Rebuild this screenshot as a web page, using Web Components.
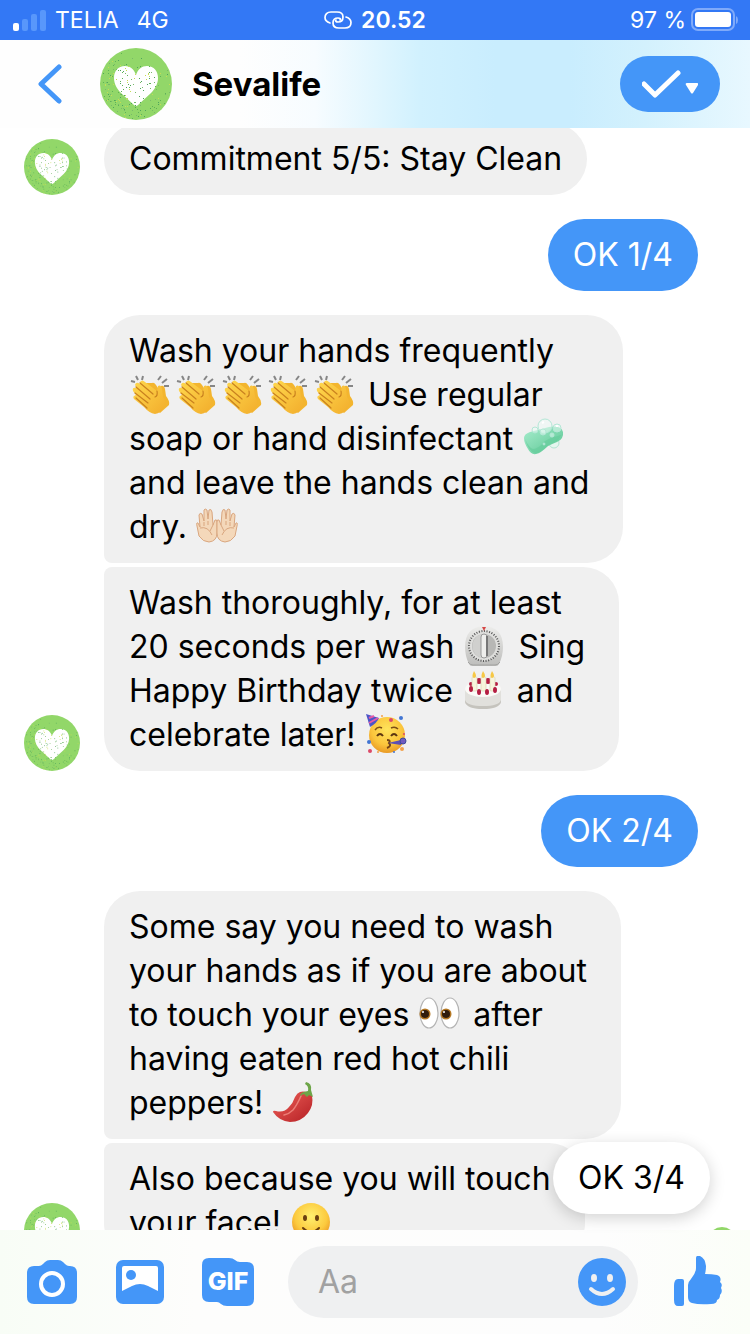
<!DOCTYPE html>
<html lang="en">
<head>
<meta charset="utf-8">
<meta name="viewport" content="width=device-width, initial-scale=1">
<title>Sevalife</title>
<style>
  body {
    margin: 0;
    background: #fff;
    color: #000;
    font-family: Inter, "Liberation Sans", sans-serif;
  }
</style>
</head>
<body>
<chat-app>
  <status-bar slot="status" carrier="TELIA" network="4G" time="20.52" battery="97 %"></status-bar>
  <chat-header slot="header">Sevalife</chat-header>

  <message-group>
    <chat-bubble>Commitment 5/5: Stay Clean</chat-bubble>
  </message-group>
  <message-group own>
    <chat-bubble own>OK 1/4</chat-bubble>
  </message-group>
  <message-group>
    <chat-bubble place="first">Wash your hands frequently 
<emoji-icon name="clap"></emoji-icon><emoji-icon name="clap"></emoji-icon><emoji-icon name="clap"></emoji-icon><emoji-icon name="clap"></emoji-icon><emoji-icon name="clap"></emoji-icon> Use regular 
soap or hand disinfectant <emoji-icon name="soap"></emoji-icon>
and leave the hands clean and 
dry. <emoji-icon name="palms"></emoji-icon></chat-bubble>
    <chat-bubble place="last">Wash thoroughly, for at least 
20 seconds per wash <emoji-icon name="timer"></emoji-icon> Sing 
Happy Birthday twice <emoji-icon name="cake"></emoji-icon> and 
celebrate later! <emoji-icon name="party"></emoji-icon></chat-bubble>
  </message-group>
  <message-group own>
    <chat-bubble own>OK 2/4</chat-bubble>
  </message-group>
  <message-group seen>
    <chat-bubble place="first">Some say you need to wash 
your hands as if you are about 
to touch your eyes <emoji-icon name="eyes"></emoji-icon> after 
having eaten red hot chili 
peppers! <emoji-icon name="chili"></emoji-icon></chat-bubble>
    <chat-bubble place="last">Also because you will touch 
your face! <emoji-icon name="smile"></emoji-icon></chat-bubble>
  </message-group>

  <quick-reply slot="reply">OK 3/4</quick-reply>
  <message-composer slot="composer"></message-composer>
</chat-app>

<script>
// Emoji drawings, all on a 40x40 grid
const emojis = {
  clap: {
    label: 'Clapping hands',
    svg: `
      <defs><linearGradient id="g" x1="0" y1="0" x2="1" y2="1"><stop offset="0" stop-color="#ffd94e"/><stop offset="1" stop-color="#f2ad2c"/></linearGradient></defs>
      <path d="M1 7l4 1M6 2l2 4M13 2l-1 4M28 6l3-4M32 9l5-4M34 12h5" stroke="#868686" stroke-width="2" fill="none"/>
      <path d="M22 9q2-1 4 2l4 6 1-5q3-1 4 3l1 7q4 5 3 9l-9 8-17-15-2-15z" fill="#f3b52f"/>
      <path d="M10 8q2-3 5 0l12 9 1-5q3-2 4 3l1 8q4 6 1 10-3 6-9 7-6-1-11-7L4 25q-2-3 2-4l-3-4q-1-4 3-3l1 0-2-3q1-4 5-1z" fill="url(#g)"/>
      <path d="M10 9l13 11M6 13l14 12M5 19l13 10M6 24l11 10M27 17q1 5-2 6" stroke="#c9811f" stroke-width="1.2" fill="none" stroke-linecap="round"/>`
  },
  soap: {
    label: 'Soap',
    svg: `
      <defs><linearGradient id="g" x1="0" y1="0" x2="1" y2="1"><stop offset="0" stop-color="#a7edcd"/><stop offset="1" stop-color="#58c491"/></linearGradient></defs>
      <circle cx="31" cy="25" r="5" fill="#e6f6ef" stroke="#b3e4d2"/>
      <path d="M1 20q0-4 6-6L26 9q12-2 14 5 1 7-6 10-5 2-9 4-7 7-12 8-5 1-8-5-4-6-4-11z" fill="url(#g)"/>
      <path d="M2 21q4 9 8 10 5 0 12-8 7-4 16-6-1 5-8 8-5 2-8 5-6 6-10 5-6-1-10-14z" fill="#66cc9b" opacity=".65"/>
      <g fill="#eefcf7" fill-opacity=".5" stroke="#b4e7d6"><circle cx="22" cy="8" r="7"/><circle cx="34" cy="10" r="4"/><circle cx="12" cy="12" r="3"/><circle cx="20" cy="14" r="3"/><circle cx="29" cy="17" r="2"/><circle cx="21" cy="26" r="1"/></g>
      <path d="M19 5l2-1M33 8l2 0" stroke="#fff" stroke-width="2"/>`
  },
  palms: {
    label: 'Palms up together',
    svg: `
      <g><path d="M20 16q0-3-2-2l-2 5-1-13q-1-4-3-2l-1 9-1-9q-2-2-3 0v11L5 8Q3 6 2 9l1 12-2-4q-2-1-1 3l2 10q4 6 10 6 8-1 8-9z" fill="#f4d8ba" stroke="#d9a67f"/>
      <path d="M7 16v4M11 15v4M3 22q8-2 12 7M16 19l-3 6" stroke="#d9a67f" fill="none"/></g>
      <g transform="translate(40 0) scale(-1 1)"><path d="M20 16q0-3-2-2l-2 5-1-13q-1-4-3-2l-1 9-1-9q-2-2-3 0v11L5 8Q3 6 2 9l1 12-2-4q-2-1-1 3l2 10q4 6 10 6 8-1 8-9z" fill="#f4d8ba" stroke="#d9a67f"/>
      <path d="M7 16v4M11 15v4M3 22q8-2 12 7M16 19l-3 6" stroke="#d9a67f" fill="none"/></g>`
  },
  timer: {
    label: 'Timer',
    svg: `
      <defs><linearGradient id="g" x1="0" y1="0" x2="0" y2="1"><stop offset="0" stop-color="#ededeb"/><stop offset="1" stop-color="#bdbdbb"/></linearGradient></defs>
      <path d="M20 0q19 1 19 21 0 9-4 17-1 2-3 2H8q-2 0-3-2-4-8-4-17Q1 1 20 0z" fill="url(#g)"/>
      <path d="M4 36q2 3 5 3h22q3 0 5-3" stroke="#a3a3a1" fill="none"/>
      <circle cx="20" cy="20" r="15" fill="#dededc" stroke="#555" stroke-width="2" stroke-dasharray="1 1.6"/>
      <circle cx="20" cy="20" r="12" fill="#b7b7b5"/>
      <path d="M10 14a12 12 0 0 1 9-6v24a12 12 0 0 1-9-18z" fill="#d0d0ce"/>
      <rect x="17" y="8" width="6" height="24" rx="3" fill="#eeeeec" stroke="#999"/><path d="M23 10v20" stroke="#777" stroke-width="2"/>
      <path d="M18 1h4l-2 4z" fill="#d64747"/>`
  },
  cake: {
    label: 'Birthday cake',
    svg: `
      <path d="M2 20q0-8 18-8t18 8v12q-2 7-18 7T2 32z" fill="#e1e0dc"/>
      <path d="M2 30q2 6 18 6t18-6v2q-2 7-18 7T2 32z" fill="#c5c3bd"/>
      <ellipse cx="20" cy="19" rx="18" ry="8" fill="#fbfaf7"/>
      <g fill="#b51e43"><circle cx="16" cy="11" r="3"/><circle cx="25" cy="11" r="3"/><circle cx="8" cy="14" r="2"/><circle cx="33" cy="14" r="2"/></g>
      <g fill="#f7f4dc" stroke="#d8d2b4" stroke-width=".6"><rect x="9" y="7" width="5" height="14" rx="1"/><rect x="18" y="7" width="5" height="14" rx="1"/><rect x="27" y="7" width="5" height="14" rx="1"/></g>
      <g fill="#f6c845"><path d="M11 1q4 6 0 7-3-1 0-7zM20 1q4 6 0 7-3-1 0-7zM29 1q4 6 0 7-3-1 0-7z"/></g>
      <g fill="#b51e43"><ellipse cx="8" cy="19" rx="2" ry="3"/><ellipse cx="16" cy="22" rx="2" ry="3"/><ellipse cx="24" cy="22" rx="2" ry="3"/><ellipse cx="32" cy="20" rx="2" ry="3"/></g>`
  },
  party: {
    label: 'Partying face',
    svg: `
      <defs><radialGradient id="g" cx=".5" cy=".35" r=".65"><stop offset="0" stop-color="#ffe45c"/><stop offset=".65" stop-color="#fbc53c"/><stop offset="1" stop-color="#e99a25"/></radialGradient></defs>
      <circle cx="21" cy="21" r="18" fill="url(#g)"/>
      <path d="M0 0l13 4q-2 5-9 9z" fill="#4b54c8"/><path d="M3 4l5-2M3 9l9-5" stroke="#e45aa8" stroke-width="2"/>
      <path d="M9 16q3-4 7-2M25 14q4-2 7 1" stroke="#7b4d16" stroke-width="1.5" fill="none"/>
      <path d="M11 22q3-4 6 0M25 22q3-4 6 0" stroke="#5c3510" stroke-width="2" fill="none"/>
      <path d="M21 26q4 0 2 3 3 3-2 5" stroke="#754414" stroke-width="2" fill="none"/>
      <path d="M22 29l13-3v5z" fill="#5c50b4"/><circle cx="37" cy="27" r="3" fill="#6f5bc0" stroke="#3f489d"/>
      <g fill="#dc4a68"><circle cx="25" cy="6" r="2"/><circle cx="4" cy="37" r="2"/><circle cx="38" cy="20" r="1"/></g>
      <g fill="#4275d3"><circle cx="35" cy="4" r="2"/><circle cx="3" cy="28" r="2"/><circle cx="28" cy="38" r="1"/></g>
      <g fill="#f3a14b"><circle cx="16" cy="2" r="1"/><circle cx="36" cy="35" r="2"/><circle cx="12" cy="38" r="1"/></g>`
  },
  eyes: {
    label: 'Eyes',
    svg: `
      <g fill="#fff" stroke="#b4b4b4" stroke-width="1.2"><ellipse cx="10" cy="19" rx="9" ry="15"/><ellipse cx="31" cy="19" rx="9" ry="15"/></g>
      <g fill="#b47722"><circle cx="6" cy="20" r="5.500"/><circle cx="27" cy="20" r="5.500"/></g>
      <g fill="#301c0c"><circle cx="6" cy="20" r="4"/><circle cx="27" cy="20" r="4"/></g>
      <g fill="#fff"><circle cx="4" cy="18" r="1"/><circle cx="25" cy="18" r="1"/></g>`
  },
  chili: {
    label: 'Hot pepper',
    svg: `
      <defs><linearGradient id="g" x1="0" y1="0" x2="1" y2="1"><stop offset="0" stop-color="#f0625a"/><stop offset="1" stop-color="#b41f24"/></linearGradient></defs>
      <path d="M27 10q6-2 12 4 2 9-4 17-7 9-18 9Q6 39 0 30q0-2 3-1 8 2 13-4 4-4 6-10 2-4 5-5z" fill="url(#g)"/>
      <path d="M28 14q-4 9-8 14-4 4-9 5" stroke="#f79a90" stroke-width="1.5" fill="none" stroke-linecap="round" opacity=".7"/>
      <path d="M35 9q1-5-3-7l1-2q6 1 5 8l2 7-4-2-2 2-3-3-4 2q0-4 8-5z" fill="#6da548"/>`
  },
  smile: {
    label: 'Slightly smiling face',
    svg: `
      <defs><radialGradient id="g" cx=".5" cy=".35" r=".65"><stop offset="0" stop-color="#fff070"/><stop offset=".65" stop-color="#fcca3e"/><stop offset="1" stop-color="#e99422"/></radialGradient></defs>
      <circle cx="20" cy="20" r="19" fill="url(#g)"/>
      <ellipse cx="14" cy="16" rx="2" ry="3" fill="#6b3f10"/><ellipse cx="26" cy="16" rx="2" ry="3" fill="#6b3f10"/>
      <path d="M12 26q8 8 16 0" stroke="#6b3f10" stroke-width="2" fill="none" stroke-linecap="round"/>`
  }
};

class EmojiIcon extends HTMLElement {
  constructor() {
    super();
    this.attachShadow({ mode: 'open' });
  }

  connectedCallback() {
    const emoji = emojis[this.getAttribute('name')];
    this.shadowRoot.innerHTML = `
      <style>
        :host {
          display: inline-block;
          width: 46px;
          height: 42px;
          vertical-align: -10px;
          white-space: normal;
        }
        svg {
          display: block;
          width: 42px;
          height: 42px;
        }
      </style>
      <svg viewBox="-1 0 42 42" role="img" aria-label="${emoji.label}">${emoji.svg}</svg>
    `;
  }
}

// Grainy dots of the page avatar, same pattern on every avatar
const createSpecks = () => {
  let seed = 11;
  const random = () => {
    seed = (seed * 16807) % 2147483647;
    return seed / 2147483647;
  };
  const colors = ['#4fa55b', '#5fb356', '#c6dd55', '#79b96a'];
  let specks = '';
  for (let i = 0; i < 560; i++) {
    const x = Math.round(random() * 72);
    const y = Math.round(random() * 72);
    const color = colors[i % 4];
    // denser towards the lower left
    if (random() < (y - x + 50) / 110 && Math.hypot(x - 36, y - 36) < 35) {
      specks += `<rect x="${x}" y="${y}" width="1" height="1" fill="${color}"/>`;
    }
  }
  return specks;
};
const specks = createSpecks();

class PageAvatar extends HTMLElement {
  constructor() {
    super();
    this.attachShadow({ mode: 'open' });
  }

  connectedCallback() {
    this.shadowRoot.innerHTML = `
      <style>
        :host {
          display: block;
          flex: none;
          width: var(--avatar-size, 56px);
          height: var(--avatar-size, 56px);
        }
        svg {
          display: block;
          width: 100%;
          height: 100%;
        }
      </style>
      <svg viewBox="0 0 72 72" role="img" aria-label="Sevalife avatar">
        <circle cx="36" cy="36" r="36" fill="#92d769"/>
        <path d="M36 27C38 21 42 18 47 18c7 0 11 5 11 12 0 6-3 11-7 15L38 57q-2 2-4 0L21 45c-4-4-7-9-7-15 0-7 4-12 11-12 5 0 9 3 11 9z" fill="#fff"/>
        ${specks}
      </svg>
    `;
  }
}

class StatusBar extends HTMLElement {
  constructor() {
    super();
    this.attachShadow({ mode: 'open' });
  }

  connectedCallback() {
    this.shadowRoot.innerHTML = `
      <style>
        :host {
          display: grid;
          grid-template-columns: 1fr auto 1fr;
          align-items: center;
          height: 40px;
          padding: 0 12px;
          background: #3378f5;
          color: #fff;
          font-size: 23px;
          line-height: 40px;
        }
        div {
          display: flex;
          align-items: center;
        }
        svg {
          display: block;
          flex: none;
        }
        .left {
          gap: 18px;
        }
        .signal {
          gap: 8px;
        }
        .center {
          gap: 9px;
          font-weight: 600;
        }
        .right {
          justify-content: flex-end;
          gap: 4px;
        }
      </style>
      <div class="left">
        <div class="signal">
          <svg width="35" height="22" viewBox="0 0 35 22" fill="#fff" aria-hidden="true">
            <rect x="1" y="14" width="6" height="8" rx="2"/>
            <g fill="#5897fb"><rect x="10" y="10" width="6" height="12" rx="2"/><rect x="19" y="5" width="6" height="17" rx="2"/><rect x="28" y="1" width="6" height="21" rx="2"/></g>
          </svg>
          <span>${this.getAttribute('carrier')}</span>
        </div>
        <span>${this.getAttribute('network')}</span>
      </div>
      <div class="center">
        <svg width="28" height="18" viewBox="0 0 28 18" fill="none" stroke="#fff" stroke-width="1.7" stroke-linecap="round" aria-hidden="true">
          <path d="M6 12C3 11 1 9 1 6.500 1 3.500 3 1 7 1h6c4 0 6 2 6 5s-2 5-5 5c-2 0-3-1-2-2"/>
          <path d="M22 6c3 1 5 3 5 5.500 0 3-2 5.500-6 5.500h-6c-4 0-6-2-6-5s2-5 5-5c2 0 3 1 2 2"/>
        </svg>
        <span>${this.getAttribute('time')}</span>
      </div>
      <div class="right">
        <span>${this.getAttribute('battery')}</span>
        <svg width="48" height="24" viewBox="0 0 48 24" aria-hidden="true">
          <rect x="2" y="1" width="42" height="21" rx="6" fill="none" stroke="#7faafa" stroke-width="2"/>
          <rect x="5" y="4" width="36" height="15" rx="3" fill="#fff"/>
          <path d="M46 8q2 1 2 4t-2 4z" fill="#7faafa"/>
        </svg>
      </div>
    `;
  }
}

class ChatHeader extends HTMLElement {
  constructor() {
    super();
    this.attachShadow({ mode: 'open' });
  }

  connectedCallback() {
    this.shadowRoot.innerHTML = `
      <style>
        :host {
          --avatar-size: 72px;
          display: flex;
          align-items: center;
          height: 88px;
          padding: 0 30px 0 28px;
          background:
            linear-gradient(90deg, #fefefe 32%, #f7fcff 42%, #e1f6fe 50%, #d1f1fe 56%, #c9edfe 66%, #c9edfe 76%, #d3f1fd 86%, #e8f8ff 100%);
        }
        button {
          display: flex;
          align-items: center;
          justify-content: center;
          padding: 0;
          border: 0;
          background: none;
          cursor: pointer;
        }
        .back {
          width: 44px;
          height: 56px;
          margin-right: 28px;
        }
        h1 {
          flex: 1;
          margin: 0 20px;
          font-size: 33px;
          font-weight: 700;
          line-height: 44px;
        }
        .done {
          width: 100px;
          height: 56px;
          border-radius: 28px;
          background: #4496f8;
        }
      </style>
      <button class="back" type="button" aria-label="Back">
        <svg width="24" height="40" viewBox="0 0 24 40" aria-hidden="true"><path d="M21 3L3 20l18 17" fill="none" stroke="#4496f8" stroke-width="5" stroke-linecap="round" stroke-linejoin="round"/></svg>
      </button>
      <page-avatar></page-avatar>
      <h1><slot></slot></h1>
      <button class="done" type="button" aria-label="Mark as done">
        <svg width="56" height="28" viewBox="0 0 56 28" aria-hidden="true"><path d="M2 14l11 11L36 3" fill="none" stroke="#fff" stroke-width="5" stroke-linecap="round" stroke-linejoin="round"/><path d="M45 13h10q2 0 1 2l-5 8q-1 1-2 0l-5-8q-1-2 1-2z" fill="#fff"/></svg>
      </button>
    `;
  }
}

class ChatBubble extends HTMLElement {
  constructor() {
    super();
    this.attachShadow({ mode: 'open' });
  }

  connectedCallback() {
    this.shadowRoot.innerHTML = `
      <style>
        :host {
          display: block;
          width: fit-content;
          padding: 14px 25px;
          border-radius: 36px;
          background: #f0f0f0;
          font-size: 32px;
          line-height: 44px;
        }
        :host([own]) {
          background: #4496f8;
          color: #fff;
        }
        :host([place="first"]) {
          border-bottom-left-radius: 8px;
        }
        :host([place="last"]) {
          border-top-left-radius: 8px;
        }
        slot {
          display: block;
          white-space: pre;
        }
      </style>
      <slot></slot>
    `;
  }
}

class MessageGroup extends HTMLElement {
  constructor() {
    super();
    this.attachShadow({ mode: 'open' });
  }

  connectedCallback() {
    const own = this.hasAttribute('own');
    const seen = this.hasAttribute('seen');
    this.shadowRoot.innerHTML = `
      <style>
        :host {
          display: flex;
          align-items: flex-end;
          gap: 24px;
          padding: 0 14px 0 24px;
        }
        :host([own]) {
          padding-right: 52px;
        }
        .bubbles {
          display: flex;
          flex: 1;
          flex-direction: column;
          align-items: flex-start;
          gap: 4px;
        }
        :host([own]) .bubbles {
          align-items: flex-end;
        }
        .seen {
          --avatar-size: 28px;
          margin-bottom: 4px;
        }
      </style>
      ${own ? '' : '<page-avatar></page-avatar>'}
      <div class="bubbles"><slot></slot></div>
      ${seen ? '<page-avatar class="seen"></page-avatar>' : ''}
    `;
  }
}

class QuickReply extends HTMLElement {
  constructor() {
    super();
    this.attachShadow({ mode: 'open' });
  }

  connectedCallback() {
    this.shadowRoot.innerHTML = `
      <style>
        :host {
          display: block;
        }
        button {
          display: block;
          padding: 14px 25px;
          border: 0;
          border-radius: 36px;
          background: #fff;
          box-shadow: 0 4px 16px rgba(0, 0, 0, 0.18);
          color: #000;
          font: inherit;
          font-size: 32px;
          line-height: 44px;
          cursor: pointer;
        }
      </style>
      <button type="button"><slot></slot></button>
    `;
  }
}

class MessageComposer extends HTMLElement {
  constructor() {
    super();
    this.attachShadow({ mode: 'open' });
  }

  connectedCallback() {
    this.shadowRoot.innerHTML = `
      <style>
        :host {
          display: flex;
          align-items: center;
          gap: 34px;
          height: 104px;
          padding: 0 26px;
          background: linear-gradient(90deg, #f8fdf6 0%, #fdfdfc 26%, #fdfdfd 80%, #fbfef8 100%);
        }
        button {
          display: block;
          flex: none;
          padding: 0;
          border: 0;
          background: none;
          color: #4496f8;
          font: inherit;
          cursor: pointer;
        }
        svg {
          display: block;
        }
        .tools {
          display: flex;
          gap: 36px;
        }
        .field {
          display: flex;
          flex: 1;
          align-items: center;
          min-width: 0;
          height: 72px;
          padding: 0 12px 0 30px;
          border-radius: 36px;
          background: #eff0f1;
        }
        input {
          flex: 1;
          min-width: 0;
          padding: 0;
          border: 0;
          outline: 0;
          background: none;
          color: #000;
          font: inherit;
          font-size: 32px;
          line-height: 44px;
        }
        input::placeholder {
          color: #a1a1a1;
          opacity: 1;
        }
      </style>
      <div class="tools">
        <button type="button" aria-label="Camera">
          <svg width="52" height="52" viewBox="0 0 52 52" fill="currentColor" aria-hidden="true">
            <path d="M8 10h5q2 0 4-2l2-2q2-2 5-2h8q3 0 5 2l2 2q2 2 4 2h1q7 0 7 7v24q0 7-7 7H8q-7 0-7-7V17q0-7 7-7z"/>
            <circle cx="26" cy="28" r="11" fill="none" stroke="#fff" stroke-width="4"/>
          </svg>
        </button>
        <button type="button" aria-label="Photos">
          <svg width="52" height="52" viewBox="0 0 52 52" fill="currentColor" aria-hidden="true">
            <rect x="2" y="4" width="48" height="44" rx="7"/>
            <path d="M10 10h32q2 0 2 2v23l-10-5q-8-4-16 0L8 35V12q0-2 2-2z" fill="#fff"/>
            <circle cx="17" cy="19" r="5"/>
          </svg>
        </button>
        <button type="button" aria-label="GIF">
          <svg width="52" height="52" viewBox="0 0 52 52" fill="currentColor" aria-hidden="true">
            <path d="M7 2h20q4 0 6 2 2 2 5 2h7q7 0 7 7v30q0 7-7 7H25q-4 0-6-2-2-2-4-2H7q-7 0-7-7V9q0-7 7-7z"/>
            <text x="26" y="34" fill="#fff" font-size="25" font-weight="800" text-anchor="middle">GIF</text>
          </svg>
        </button>
      </div>
      <div class="field">
        <input type="text" aria-label="Message" placeholder="Aa">
        <button type="button" aria-label="Emoji">
          <svg width="48" height="48" viewBox="0 0 48 48" fill="currentColor" aria-hidden="true">
            <circle cx="24" cy="24" r="24"/>
            <ellipse cx="16" cy="20" rx="3" ry="4" fill="#eff0f1"/><ellipse cx="32" cy="20" rx="3" ry="4" fill="#eff0f1"/>
            <path d="M13 31q11 10 22 0" fill="none" stroke="#eff0f1" stroke-width="4" stroke-linecap="round"/>
          </svg>
        </button>
      </div>
      <button type="button" aria-label="Like">
        <svg width="52" height="52" viewBox="0 0 52 52" fill="currentColor" aria-hidden="true">
          <path d="M6 23h4q2 0 2 2v23q0 2-2 2H6q-4 0-4-6V30q0-7 4-7z"/>
          <path d="M24 2q0-3 4-2 5 2 6 10 0 4-1 8 7 0 12 1 5 2 3 7 3 2 1 6 2 4-1 7 0 4-3 5 0 4-6 4-12 1-19-1-4-1-4-6V29q0-3 3-6 5-6 5-11z"/>
        </svg>
      </button>
    `;
  }
}

class ChatApp extends HTMLElement {
  constructor() {
    super();
    this.attachShadow({ mode: 'open' });
  }

  connectedCallback() {
    this.shadowRoot.innerHTML = `
      <style>
        :host {
          display: flex;
          flex-direction: column;
          height: 100vh;
          overflow: hidden;
        }
        main {
          position: relative;
          display: flex;
          flex: 1;
          min-height: 0;
        }
        .thread {
          display: flex;
          flex: 1;
          flex-direction: column;
          gap: 24px;
          min-width: 0;
          overflow: hidden auto;
          scrollbar-width: none;
        }
        .thread ::slotted(*) {
          flex: none;
        }
        .reply {
          position: absolute;
          right: 40px;
          bottom: 16px;
        }
      </style>
      <slot name="status"></slot>
      <slot name="header"></slot>
      <main>
        <div class="thread"><slot></slot></div>
        <div class="reply"><slot name="reply"></slot></div>
      </main>
      <slot name="composer"></slot>
    `;
  }
}

customElements.define('emoji-icon', EmojiIcon);
customElements.define('page-avatar', PageAvatar);
customElements.define('status-bar', StatusBar);
customElements.define('chat-header', ChatHeader);
customElements.define('chat-bubble', ChatBubble);
customElements.define('message-group', MessageGroup);
customElements.define('quick-reply', QuickReply);
customElements.define('message-composer', MessageComposer);
customElements.define('chat-app', ChatApp);

// The thread opens slightly scrolled, under the header
document.querySelector('chat-app').shadowRoot.querySelector('.thread').scrollTop = 5;
</script>
</body>
</html>
